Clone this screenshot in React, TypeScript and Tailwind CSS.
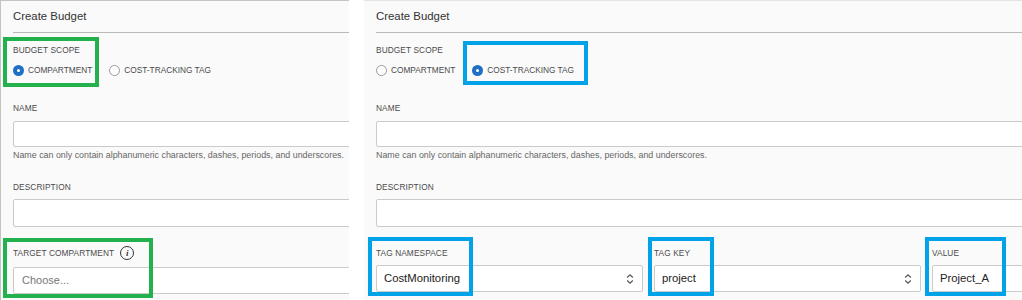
import React from "react"

const font = { fontFamily: '"Liberation Sans", Arial, sans-serif' }

function Label({ children }: { children: React.ReactNode }) {
  return <div className="h-[12px] text-[8.3px] leading-[12px] tracking-[0.1px] text-[#4a4a4a]">{children}</div>
}

function Radio({ checked, label }: { checked?: boolean; label: string }) {
  return (
    <div className="flex items-center gap-[4px]">
      {checked ? (
        <span className="flex h-[11px] w-[11px] items-center justify-center rounded-full bg-[#1f6fc4]">
          <span className="h-[3px] w-[3px] rounded-full bg-white" />
        </span>
      ) : (
        <span className="h-[11px] w-[11px] rounded-full border border-[#9a9a9a] bg-white" />
      )}
      <span className="text-[8.3px] text-[#4a4a4a]">{label}</span>
    </div>
  )
}

function Chevrons() {
  return (
    <svg width="8" height="12" viewBox="0 0 8 12" fill="none" stroke="#555" strokeWidth="1.2">
      <path d="M1.2 4.5 L4 1.8 L6.8 4.5" />
      <path d="M1.2 7.5 L4 10.2 L6.8 7.5" />
    </svg>
  )
}

function InfoIcon() {
  return (
    <span className="ml-[6px] flex h-[14px] w-[14px] items-center justify-center rounded-full border border-[#333] text-[9px] font-bold italic leading-none text-[#333]" style={{ fontFamily: '"Liberation Serif", serif' }}>
      i
    </span>
  )
}

function Box({ className }: { className: string }) {
  return <div className={"pointer-events-none absolute " + className} />
}

function ScopeAndName({ tag }: { tag?: boolean }) {
  return (
    <>
      <div className="flex h-[32px] items-center border-b border-[#b9b9b9] text-[11.4px] text-[#333]">
        <span>Create Budget</span>
      </div>
      <div className="pt-[11px]">
        <Label>BUDGET SCOPE</Label>
        <div className="mt-[6px] flex h-[16px] items-center gap-[17px]">
          <Radio checked={!tag} label="COMPARTMENT" />
          <Radio checked={tag} label="COST-TRACKING TAG" />
        </div>
        <div className="mt-[24px]">
          <Label>NAME</Label>
        </div>
        <div className="mt-[7px] h-[26px] w-[700px] rounded-[2px] border border-[#cbcbcb] bg-white" />
        <div className="mt-[3px] h-[10px] whitespace-nowrap text-[8.9px] leading-[10px] text-[#666]">
          Name can only contain alphanumeric characters, dashes, periods, and underscores.
        </div>
        <div className="mt-[21px]">
          <Label>DESCRIPTION</Label>
        </div>
        <div className="mt-[6px] h-[28px] w-[700px] rounded-[2px] border border-[#cbcbcb] bg-white" />
      </div>
    </>
  )
}

export default function App() {
  return (
    <div className="relative flex h-[300px] w-[1022px] overflow-hidden bg-white" style={font}>
      {/* left: compartment scope */}
      <div className="h-[300px] w-[349px] flex-none overflow-hidden border-l border-t border-[#c4c4c4] bg-[#fafafa] pl-[12px]">
        <ScopeAndName />
        <div className="mt-[19px] flex h-[14px] items-center">
          <Label>TARGET COMPARTMENT</Label>
          <InfoIcon />
        </div>
        <div className="mt-[7px] flex h-[27px] w-[700px] items-center rounded-[2px] border border-[#cbcbcb] bg-white pl-[8px] text-[11px] text-[#777]">
          Choose...
        </div>
      </div>

      <div className="w-[15px] flex-none" />

      {/* right: cost-tracking tag scope */}
      <div className="h-[300px] flex-1 overflow-hidden border-t border-[#e4e4e4] bg-[#fafafa] pl-[12px]">
        <ScopeAndName tag />
        <div className="mt-[19px] flex gap-[11px]">
          {[
            { label: "TAG NAMESPACE", value: "CostMonitoring", select: true },
            { label: "TAG KEY", value: "project", select: true },
            { label: "VALUE", value: "Project_A", select: false },
          ].map((f) => (
            <div key={f.label} className="w-[267px] flex-none">
              <div className="flex h-[14px] items-center">
                <Label>{f.label}</Label>
              </div>
              <div className="mt-[5px] flex h-[27px] items-center justify-between rounded-[2px] border border-[#cbcbcb] bg-white pl-[7px] pr-[8px] text-[11.3px] text-[#222]">
                <span>{f.value}</span>
                {f.select && <Chevrons />}
              </div>
            </div>
          ))}
        </div>
      </div>

      {/* annotation outlines */}
      <Box className="left-[3px] top-[37px] h-[50px] w-[96px] border-[4px] border-[#22b14c]" />
      <Box className="left-[3px] top-[238px] h-[60px] w-[150px] border-[4px] border-[#22b14c]" />
      <Box className="left-[463px] top-[41px] h-[44px] w-[125px] border-[4px] border-[#00a2e8]" />
      <Box className="left-[368px] top-[237px] h-[59px] w-[105px] border-[4px] border-[#00a2e8]" />
      <Box className="left-[648px] top-[237px] h-[59px] w-[66px] border-[4px] border-[#00a2e8]" />
      <Box className="left-[925px] top-[237px] h-[59px] w-[81px] border-[4px] border-[#00a2e8]" />
    </div>
  )
}
